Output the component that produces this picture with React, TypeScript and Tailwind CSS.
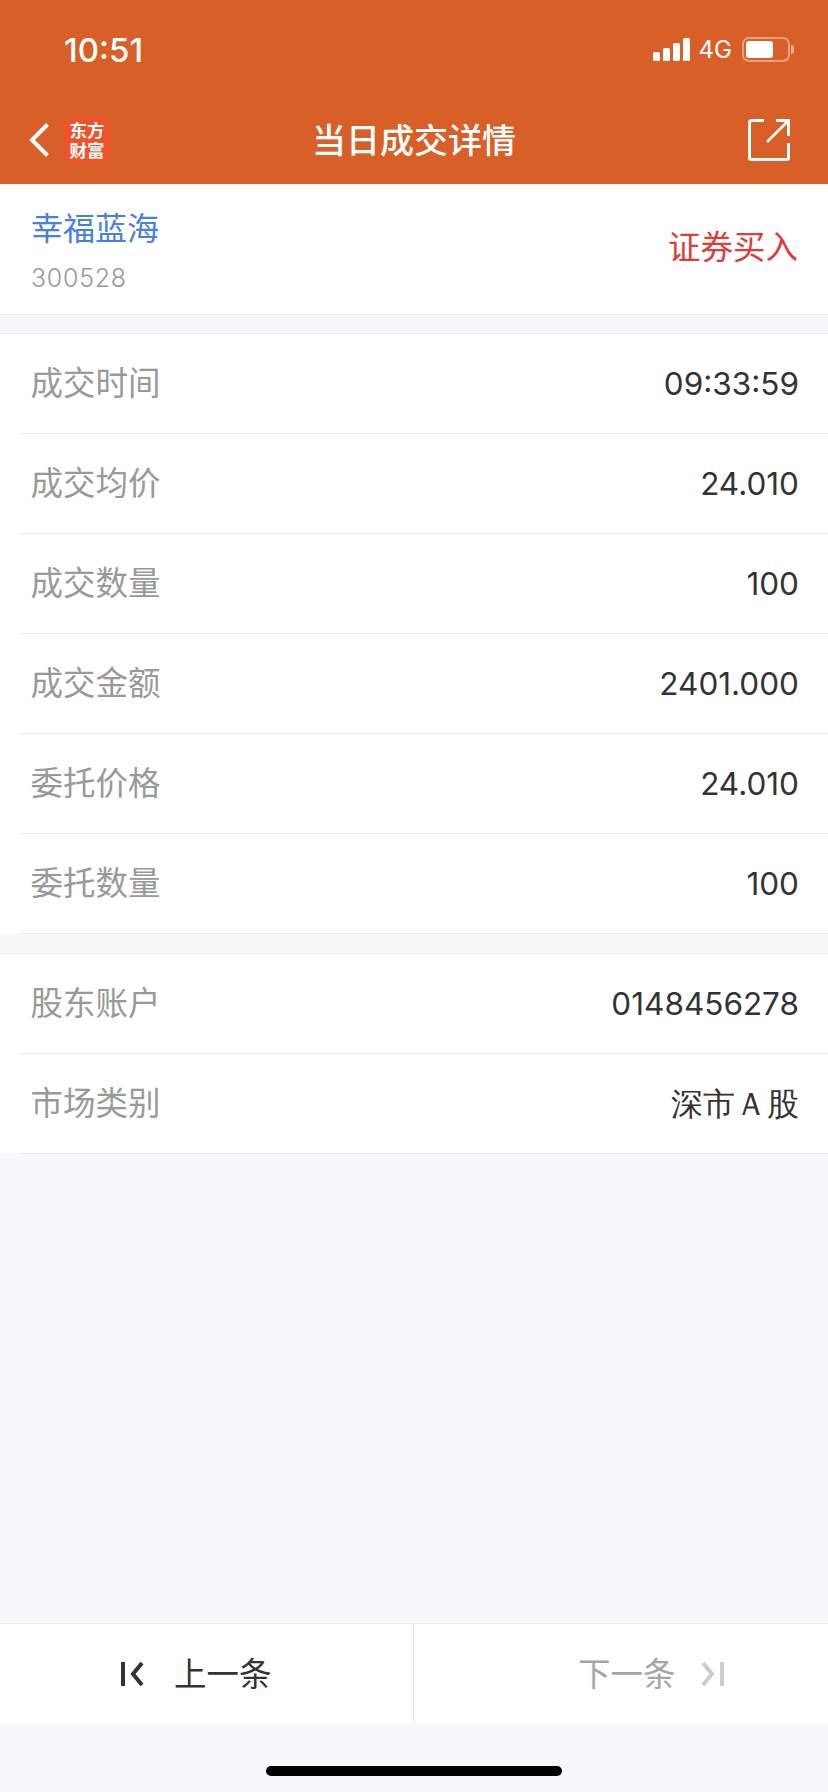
const cjk = "font-['Noto_Sans_CJK_SC','Liberation_Sans',sans-serif]";

const tradeRows = [
  { label: "成交时间", value: "09:33:59" },
  { label: "成交均价", value: "24.010" },
  { label: "成交数量", value: "100" },
  { label: "成交金额", value: "2401.000" },
  { label: "委托价格", value: "24.010" },
  { label: "委托数量", value: "100" },
];

const accountRows = [
  { label: "股东账户", value: "0148456278" },
  { label: "市场类别", value: "深市Ａ股" },
];

function DetailRow({ label, value }: { label: string; value: string }) {
  return (
    <div className="ml-5 flex h-[100px] items-center justify-between border-b border-[#ebebeb] pr-[29px]">
      <span className="ml-[10.5px] pb-[4px] text-[32.5px] leading-none text-[#999999]">{label}</span>
      <span className="font-['Inter',sans-serif] text-[31.5px] leading-none text-[#333333]">{value}</span>
    </div>
  );
}

function StatusBar() {
  return (
    <div className="flex h-[88px] items-start justify-between pt-[30px] pl-[64px] pr-[34px] text-white">
      <span className="font-['Inter',sans-serif] text-[33px] leading-[40px] font-medium">10:51</span>
      <div className="mt-[7px] flex items-center">
        <svg width="37" height="23" viewBox="0 0 37 23" fill="white">
          <rect x="0" y="14" width="7" height="9" rx="1.5" />
          <rect x="10" y="10" width="7" height="13" rx="1.5" />
          <rect x="20" y="5" width="7" height="18" rx="1.5" />
          <rect x="30" y="0" width="7" height="23" rx="1.5" />
        </svg>
        <span className="ml-[9px] font-['Inter',sans-serif] text-[24px] leading-none">4G</span>
        <div className="ml-[10px] flex items-center">
          <div className="h-[25px] w-[48px] rounded-[7px] border-2 border-white/40 p-[2px]">
            <div className="h-full w-[27px] rounded-[3px] bg-white" />
          </div>
          <div className="ml-[1px] h-[9px] w-[3px] rounded-r-full bg-white/50" />
        </div>
      </div>
    </div>
  );
}

function NavBar() {
  return (
    <div className="grid h-[96px] grid-cols-[1fr_auto_1fr] items-center pt-[8px] px-[38px]">
      <div className="-ml-[9px] flex items-center">
        <svg width="20" height="34" viewBox="0 0 20 34" fill="none" stroke="white" strokeWidth="4">
          <path d="M18.5 1.5 L3 17 L18.5 32.5" />
        </svg>
        <div className="ml-[15px] flex h-[46px] w-[46px] shrink-0 flex-col items-center justify-center rounded-[10px] bg-[#ee5329] text-[17.5px] leading-[20px] font-bold text-white">
          <span>东方</span>
          <span>财富</span>
        </div>
      </div>
      <span className="pb-[2px] text-center text-[34px] leading-none font-medium text-white">当日成交详情</span>
      <svg className="justify-self-end" width="42" height="42" viewBox="0 0 42 42" fill="none" stroke="white" strokeWidth="3">
        <path d="M16 1.5 H3.5 Q1.5 1.5 1.5 3.5 V38.5 Q1.5 40.5 3.5 40.5 H38.5 Q40.5 40.5 40.5 38.5 V24" />
        <path d="M19 23 L40 2" strokeWidth="2.5" />
        <path d="M28 1.5 H40.5 V17" />
      </svg>
    </div>
  );
}

export default function App() {
  return (
    <div className={`flex h-[1792px] w-[828px] flex-col overflow-hidden bg-[#f7f8fa] ${cjk}`}>
      <div className="h-[184px] bg-[#d85f28]">
        <StatusBar />
        <NavBar />
      </div>

      <div className="flex h-[131px] items-center justify-between border-b border-[#ebebeb] bg-white pl-[31px] pr-[30px]">
        <div className="flex flex-col pb-[2px]">
          <span className="text-[32px] leading-[44px] text-[#4a80dc]">幸福蓝海</span>
          <span className="mt-[15px] font-['Inter',sans-serif] text-[25px] leading-[30px] font-light tracking-[0.7px] text-[#999999]">300528</span>
        </div>
        <span className="mb-[8px] text-[32.5px] leading-none text-[#e03a3a]">证券买入</span>
      </div>

      <div className="mt-[18px] border-t border-[#ebebeb] bg-white">
        {tradeRows.map((row) => (
          <DetailRow key={row.label} label={row.label} value={row.value} />
        ))}
      </div>

      <div className="mt-[19px] border-t border-[#ebebeb] bg-white">
        {accountRows.map((row) => (
          <DetailRow key={row.label} label={row.label} value={row.value} />
        ))}
      </div>

      <div className="flex-1" />

      <div className="flex h-[101px] border-t border-[#ebebeb] bg-white">
        <div className="flex w-[414px] items-center gap-[30px] border-r border-[#ebebeb] pl-[121px] text-[32.5px] text-[#333333]">
          <svg width="23" height="24" viewBox="0 0 23 24" fill="none" stroke="#333333" strokeWidth="4">
            <path d="M2 0 V24" />
            <path d="M21 1 L12 12 L21 23" />
          </svg>
          <span className="pb-[4px] leading-none">上一条</span>
        </div>
        <div className="flex flex-1 items-center gap-[25px] pl-[164px] text-[32.5px] text-[#a6a6a6]">
          <span className="pb-[4px] leading-none">下一条</span>
          <svg width="23" height="24" viewBox="0 0 23 24" fill="none" stroke="#cccccc" strokeWidth="4">
            <path d="M21 0 V24" />
            <path d="M2 1 L11 12 L2 23" />
          </svg>
        </div>
      </div>

      <div className="flex h-[68px] items-start justify-center pt-[42px]">
        <div className="h-[10px] w-[296px] rounded-full bg-black" />
      </div>
    </div>
  );
}
